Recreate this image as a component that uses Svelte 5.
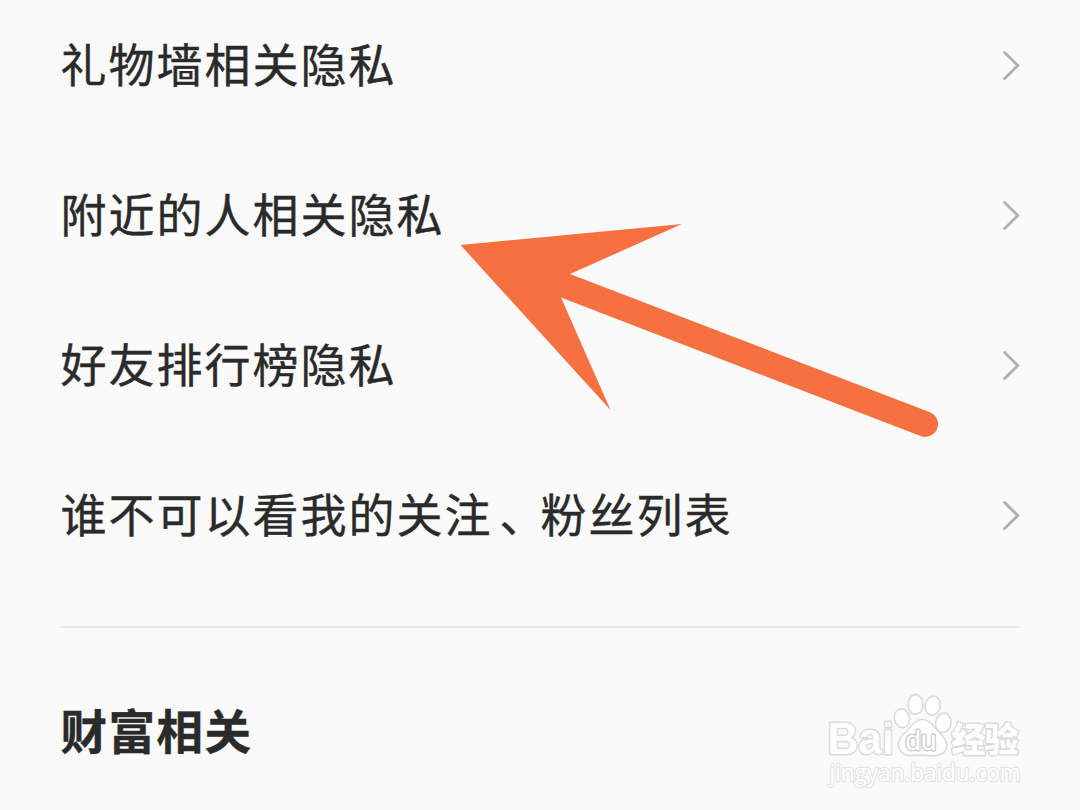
<script>
  const rows = [
    ['礼物墙相关隐私'],
    ['附近的人相关隐私'],
    ['好友排行榜隐私'],
    ['谁不可以看我的关注', '、', '粉丝列表']
  ];
</script>

<main class="page">
  <ul class="list">
    {#each rows as parts}
      <li class="row">
        <span class="label">{#each parts as part}<span class:comma={part === '、'}>{part}</span>{/each}</span>
        <svg class="chevron" width="20" height="32" viewBox="0 0 20 32" aria-hidden="true">
          <path d="M4.6 2.6 L17.8 15.6 L4.6 28.6" />
        </svg>
      </li>
    {/each}
  </ul>
  <hr class="divider" />
  <h2 class="heading">财富相关</h2>

  <svg class="arrow" width="1080" height="810" viewBox="0 0 1080 810" aria-hidden="true">
    <path d="M460.5 245 L682 224 L570 274 L930 412.2 A12.6 12.6 0 0 1 920.5 436 L561 297.5 L610.5 410 Z" />
  </svg>

  <svg class="watermark" width="220" height="120" viewBox="820 685 220 120">
    <g class="mark">
      <text class="latin" x="827.5" y="753.8" textLength="66.5" lengthAdjust="spacingAndGlyphs">Bai</text>
      <ellipse cx="902" cy="718.3" rx="7.6" ry="9.5" transform="rotate(-12 902 718.3)" />
      <ellipse cx="915.5" cy="704.5" rx="7.4" ry="9.9" />
      <ellipse cx="932.7" cy="705.7" rx="7.6" ry="9.6" transform="rotate(10 932.7 705.7)" />
      <ellipse cx="943.3" cy="722.7" rx="7.7" ry="9.8" transform="rotate(10 943.3 722.7)" />
      <path d="M922 719.5 C914 719.5 911 727 907 731 C902 735 898 739 898.5 745 C899 752 905 756 911 755.5 C917 755 925 755 931 755.8 C939 756.5 946 753 946.8 746 C947 739 942 735 938 731 C933 726 930 719.5 922 719.5 Z" />
      <text class="du" x="905.5" y="749.5" textLength="31" lengthAdjust="spacingAndGlyphs">du</text>
      <text class="hanzi" x="951.5" y="751.5" textLength="67">经验</text>
      <text class="url" x="829.5" y="780.5" textLength="191" lengthAdjust="spacingAndGlyphs">jingyan.baidu.com</text>
    </g>
  </svg>
</main>

<style>
  :global(body) {
    background: #fafafa;
    overflow: hidden;
  }

  .page {
    position: relative;
    box-sizing: border-box;
    width: 1080px;
    height: 810px;
    padding: 0 60px;
    overflow: hidden;
    background: #fafafa;
    color: #2a2a2a;
    font-family: 'Noto Sans CJK SC', sans-serif;
  }

  .list {
    list-style: none;
    margin: -9px 0 0;
    padding: 0;
  }

  .row {
    display: flex;
    align-items: center;
    justify-content: space-between;
    height: 150px;
  }

  .label {
    padding: 0 0 9px 0.5px;
    font-size: 46px;
    letter-spacing: 2px;
    line-height: 72px;
    white-space: nowrap;
    -webkit-text-stroke: 0.4px #2a2a2a;
  }

  .comma {
    margin: 0 -7px 0 7px;
  }

  .chevron path {
    fill: none;
    stroke: #b0b0b0;
    stroke-width: 2.8;
    stroke-linecap: round;
  }

  .divider {
    height: 2px;
    margin: 35px 0 0;
    border: 0;
    background: #e8e8e8;
  }

  .heading {
    margin: 65px 0 0;
    padding-left: 0.5px;
    font-size: 46.5px;
    letter-spacing: 1.5px;
    font-weight: 700;
    line-height: 72px;
    -webkit-text-stroke: 0.4px #2a2a2a;
  }

  .arrow {
    position: absolute;
    inset: 0;
  }

  .arrow path {
    fill: #f67040;
  }

  .watermark {
    position: absolute;
    left: 820px;
    top: 685px;
  }

  .mark {
    fill: #fff;
    stroke: #dadada;
    stroke-width: 1.6;
    stroke-linejoin: round;
  }

  .mark text {
    paint-order: stroke;
    stroke-width: 2.8;
  }

  .mark .latin {
    font: 700 44px 'Liberation Sans', sans-serif;
  }

  .mark .du {
    font: 400 27px 'Liberation Sans', sans-serif;
    stroke: #cecece;
  }

  .mark .hanzi {
    font: 900 34px 'Noto Sans CJK SC', sans-serif;
  }

  .mark .url {
    font: 400 24px 'Open Sans', sans-serif;
    stroke: #e4e4e4;
    stroke-width: 2.4;
  }
</style>
